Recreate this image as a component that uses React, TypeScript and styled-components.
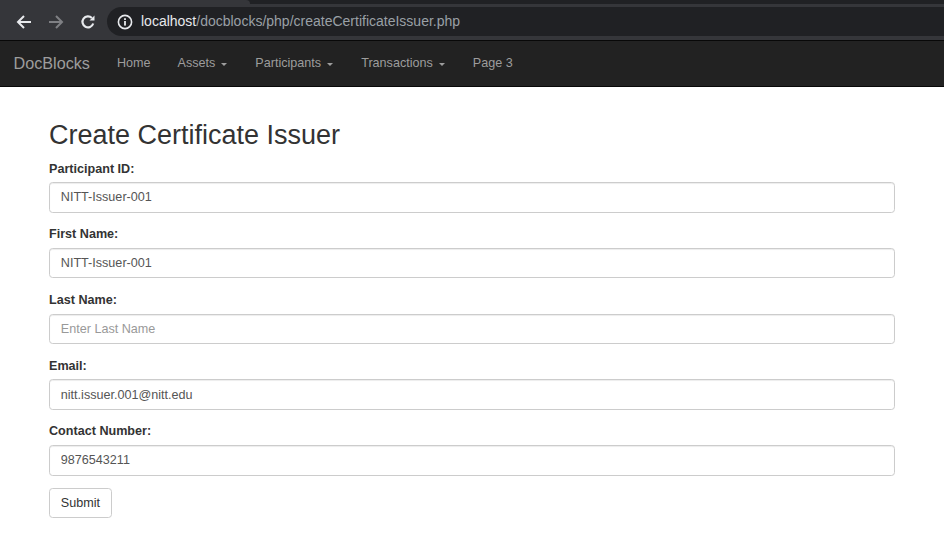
import { createGlobalStyle, styled } from "styled-components";

const GlobalStyle = createGlobalStyle`
  html, body {
    margin: 0;
    padding: 0;
    background: #fff;
  }
  body {
    font-family: "Liberation Sans", Arial, sans-serif;
    font-size: 12.6px;
    line-height: 1.42857;
    color: #333;
  }
  * {
    box-sizing: border-box;
  }
`;

const Chrome = styled.div`
  height: 40px;
  background: #35363a;
  display: flex;
  flex-direction: column;
`;

const TabStrip = styled.div`
  height: 4px;
  background: #202124;
  display: flex;
`;

const ActiveTab = styled.div`
  width: 250px;
  height: 100%;
  background: #35363a;
  border-top-right-radius: 6px;
`;

const Toolbar = styled.div`
  flex: 1;
  display: flex;
  align-items: center;
  padding: 0 0 1px 8px;
`;

const NavIcon = styled.div<{ $dim?: boolean }>`
  width: 32px;
  height: 28px;
  display: flex;
  align-items: center;
  justify-content: center;
  color: ${({ $dim }) => ($dim ? "#7f8084" : "#e8eaed")};
`;

const Omnibox = styled.div`
  flex: 1;
  margin-left: 3px;
  height: 29px;
  background: #202124;
  border-radius: 15px 0 0 15px;
  display: flex;
  align-items: center;
  padding-left: 10px;
  font-family: "Liberation Sans", Arial, sans-serif;
  font-size: 14px;
  color: #9aa0a6;
`;

const Host = styled.span`
  color: #e8eaed;
  margin-left: 8px;
`;

const Navbar = styled.nav`
  height: 47px;
  background: #222;
  border-top: 1px solid #080808;
  border-bottom: 1px solid #080808;
  display: flex;
  align-items: center;
  padding: 0 13.5px 1px;
`;

const Brand = styled.a`
  font-size: 16.2px;
  color: #9d9d9d;
  padding-right: 13.5px;
  text-decoration: none;
  line-height: 18px;
`;

const NavList = styled.ul`
  display: flex;
  list-style: none;
  margin: 0;
  padding: 0;
`;

const NavLink = styled.a`
  display: flex;
  align-items: center;
  padding: 0 13.5px;
  line-height: 18px;
  color: #9d9d9d;
  text-decoration: none;
`;

const Caret = styled.span`
  display: inline-block;
  width: 0;
  height: 0;
  margin-left: 6px;
  margin-right: 1px;
  margin-top: 2px;
  border-top: 3.6px solid #9d9d9d;
  border-left: 3.6px solid transparent;
  border-right: 3.6px solid transparent;
`;

const Container = styled.main`
  width: 846px;
  margin: 0 auto;
  padding-top: 16px;
`;

const Title = styled.h2`
  font-size: 27px;
  font-weight: 500;
  line-height: 1.1;
  margin: 18px 0 9px;
  color: #333;
`;

const FormGroup = styled.div`
  margin-bottom: 12.6px;
`;

const Label = styled.label`
  display: block;
  font-weight: bold;
  line-height: 18px;
  margin-bottom: 4.5px;
`;

const Input = styled.input`
  display: block;
  width: 100%;
  height: 30.6px;
  padding: 5.4px 10.8px;
  font-family: "Liberation Sans", Arial, sans-serif;
  font-size: 12.6px;
  color: #555;
  background: #fff;
  border: 1px solid #ccc;
  border-radius: 3.6px;
  box-shadow: inset 0 1px 1px rgba(0, 0, 0, 0.075);
  outline: none;
  &::placeholder {
    color: #999;
  }
`;

const Button = styled.button`
  height: 30px;
  padding: 5.4px 10.8px;
  font-family: "Liberation Sans", Arial, sans-serif;
  font-size: 12.6px;
  color: #333;
  background: #fff;
  border: 1px solid #ccc;
  border-radius: 3.6px;
`;

const fields = [
  { label: "Participant ID:", value: "NITT-Issuer-001" },
  { label: "First Name:", value: "NITT-Issuer-001" },
  { label: "Last Name:", value: "", placeholder: "Enter Last Name" },
  { label: "Email:", value: "nitt.issuer.001@nitt.edu" },
  { label: "Contact Number:", value: "9876543211" },
];

const navItems = [
  { text: "Home" },
  { text: "Assets", dropdown: true },
  { text: "Participants", dropdown: true },
  { text: "Transactions", dropdown: true },
  { text: "Page 3" },
];

export default function App() {
  return (
    <>
      <GlobalStyle />
      <Chrome>
        <TabStrip>
          <ActiveTab />
        </TabStrip>
        <Toolbar>
          <NavIcon>
            <svg width="16" height="16" viewBox="0 0 16 16" fill="none" stroke="currentColor" strokeWidth="2">
              <path d="M15 8H2M8 2L2 8l6 6" />
            </svg>
          </NavIcon>
          <NavIcon $dim>
            <svg width="16" height="16" viewBox="0 0 16 16" fill="none" stroke="currentColor" strokeWidth="2">
              <path d="M1 8h13M8 2l6 6-6 6" />
            </svg>
          </NavIcon>
          <NavIcon>
            <svg width="16" height="16" viewBox="0 0 16 16" fill="none" stroke="currentColor" strokeWidth="2.2">
              <path d="M13.2 9.5A5.5 5.5 0 1 1 11.9 4" />
              <path d="M14.5 1.5v5h-5z" fill="currentColor" strokeWidth="0" />
            </svg>
          </NavIcon>
          <Omnibox>
            <svg width="16" height="16" viewBox="0 0 16 16">
              <circle cx="8" cy="8" r="6.6" fill="none" stroke="#e8eaed" strokeWidth="1.6" />
              <rect x="7.1" y="7" width="1.8" height="4.6" fill="#e8eaed" />
              <rect x="7.1" y="4.2" width="1.8" height="1.8" fill="#e8eaed" />
            </svg>
            <Host>localhost</Host>
            <span>/docblocks/php/createCertificateIssuer.php</span>
          </Omnibox>
        </Toolbar>
      </Chrome>
      <Navbar>
        <Brand href="#">DocBlocks</Brand>
        <NavList>
          {navItems.map((item) => (
            <li key={item.text}>
              <NavLink href="#">
                {item.text}
                {item.dropdown && <Caret />}
              </NavLink>
            </li>
          ))}
        </NavList>
      </Navbar>
      <Container>
        <Title>Create Certificate Issuer</Title>
        <form onSubmit={(e) => e.preventDefault()}>
          {fields.map((field) => (
            <FormGroup key={field.label}>
              <Label>{field.label}</Label>
              <Input defaultValue={field.value} placeholder={field.placeholder} />
            </FormGroup>
          ))}
          <Button type="submit">Submit</Button>
        </form>
      </Container>
    </>
  );
}
